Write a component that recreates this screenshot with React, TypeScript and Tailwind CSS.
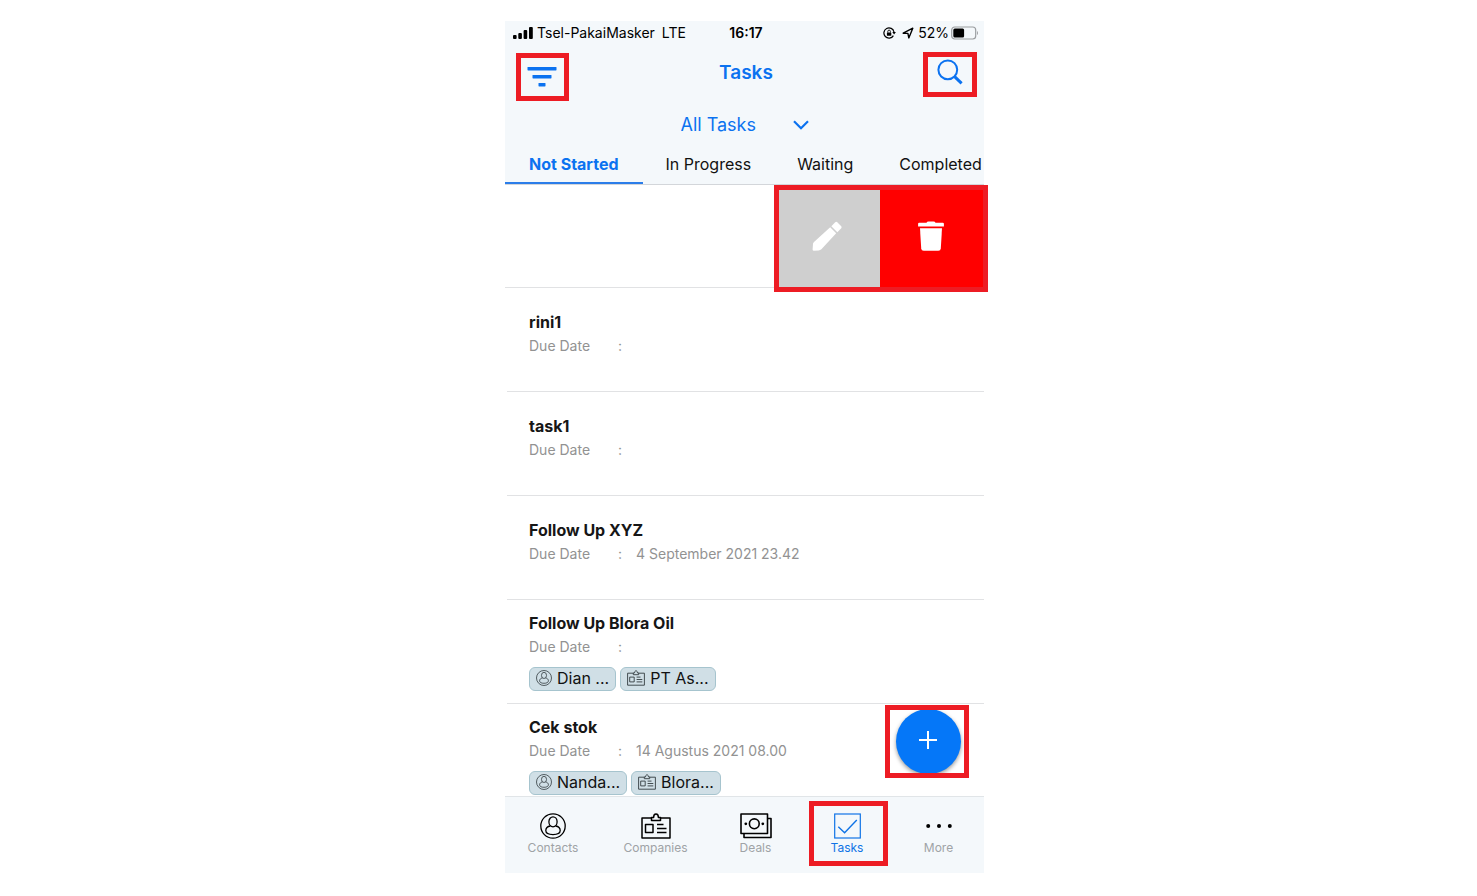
import { useState } from "react";
import type { ReactNode } from "react";

type Chip = { kind: "contact" | "company"; label: string };
type Task = { title: string; due?: string; chips?: Chip[] };

const tasks: Task[] = [
  { title: "rini1" },
  { title: "task1" },
  { title: "Follow Up XYZ", due: "4 September 2021 23.42" },
  {
    title: "Follow Up Blora Oil",
    chips: [
      { kind: "contact", label: "Dian ..." },
      { kind: "company", label: "PT As..." },
    ],
  },
  {
    title: "Cek stok",
    due: "14 Agustus 2021 08.00",
    chips: [
      { kind: "contact", label: "Nanda..." },
      { kind: "company", label: "Blora..." },
    ],
  },
];

const stages = ["Not Started", "In Progress", "Waiting", "Completed"];

function ContactIcon({ className }: { className: string }) {
  return (
    <svg viewBox="0 0 26 26" className={className} fill="none" stroke="currentColor" strokeWidth="1.3" aria-hidden="true">
      <circle cx="13" cy="13" r="12.2" />
      <ellipse cx="13" cy="8.8" rx="4.1" ry="5" />
      <path d="M10.4 13C7.5 13.4 5.8 15.3 5.8 17.6C5.8 20.2 8.8 21.6 13 21.6S20.2 20.2 20.2 17.6C20.2 15.3 18.5 13.4 15.6 13" />
    </svg>
  );
}

function CompanyIcon({ className }: { className: string }) {
  return (
    <svg viewBox="0 0 30 26" className={className} fill="none" stroke="currentColor" strokeWidth="1.5" strokeLinejoin="round" aria-hidden="true">
      <path d="M10.5 5H1V25H29V5H19.5" />
      <path d="M10.5 7.5V4.5H12.6C12.6 2.4 13.5 1 15 1S17.4 2.4 17.4 4.5H19.5V7.5Z" />
      <rect x="4.5" y="11.5" width="7.5" height="8" />
      <path d="M16 11.5H22.5M16 15.5H25.5M16 19.5H25.5" />
    </svg>
  );
}

function DealsIcon() {
  return (
    <svg viewBox="0 0 32 26" className="h-[26px] w-8" fill="none" stroke="currentColor" strokeWidth="1.6" strokeLinejoin="round" aria-hidden="true">
      <rect x="1" y="1" width="26.5" height="19.5" />
      <path d="M27.5 5.5H31V24.5H4V20.5" />
      <circle cx="14.3" cy="10.8" r="4.9" />
      <circle cx="5.8" cy="10.8" r="1.4" fill="currentColor" stroke="none" />
      <circle cx="22.8" cy="10.8" r="1.4" fill="currentColor" stroke="none" />
    </svg>
  );
}

function TasksIcon() {
  return (
    <svg viewBox="0 0 27 26" className="h-[26px] w-[27px]" fill="none" stroke="currentColor" strokeWidth="1.2" aria-hidden="true">
      <rect x="0.7" y="1" width="25.6" height="24" />
      <path d="M4.3 13.8L10.6 19.8L22.8 7" strokeWidth="1.4" />
    </svg>
  );
}

function MoreIcon() {
  return (
    <svg viewBox="0 0 26 26" className="size-[26px]" fill="currentColor" aria-hidden="true">
      <circle cx="2.2" cy="13" r="2" />
      <circle cx="13" cy="13" r="2" />
      <circle cx="23.8" cy="13" r="2" />
    </svg>
  );
}

const tabs: { label: string; icon: ReactNode }[] = [
  { label: "Contacts", icon: <ContactIcon className="size-[26px]" /> },
  { label: "Companies", icon: <CompanyIcon className="h-[26px] w-[30px]" /> },
  { label: "Deals", icon: <DealsIcon /> },
  { label: "Tasks", icon: <TasksIcon /> },
  { label: "More", icon: <MoreIcon /> },
];

function StatusBar() {
  return (
    <div className="grid h-6 grid-cols-[1fr_auto_1fr] items-center pr-[5px] pl-2 text-sm text-black">
      <div className="flex items-center gap-1">
        <svg viewBox="0 0 20 12" className="h-3 w-5" fill="currentColor" aria-hidden="true">
          <rect x="0" y="8" width="3.6" height="4" rx="1" />
          <rect x="5.3" y="6" width="3.6" height="6" rx="1" />
          <rect x="10.6" y="3" width="3.6" height="9" rx="1" />
          <rect x="16" y="0" width="3.8" height="12" rx="1" />
        </svg>
        <span>Tsel-PakaiMasker</span>
        <span className="pl-[3px]">LTE</span>
      </div>
      <time className="font-semibold">16:17</time>
      <div className="flex items-center justify-end">
        <svg viewBox="0 0 13 12" className="mr-1.5 h-3 w-[13px]" fill="none" stroke="currentColor" strokeWidth="1.2" aria-hidden="true">
          <path d="M10.4 8.6A5.1 5.1 0 1 1 11 5" />
          <path d="M9.3 5.1H12.9L11.1 7.6Z" fill="currentColor" stroke="none" />
          <rect x="3.9" y="5.4" width="4.4" height="3.4" rx="0.5" fill="currentColor" stroke="none" />
          <path d="M4.8 5.6V4.4A1.3 1.3 0 0 1 7.4 4.4V5.6" strokeWidth="0.9" />
        </svg>
        <svg viewBox="0 0 12 12" className="mr-1 size-3" fill="none" stroke="currentColor" strokeWidth="1.4" strokeLinejoin="round" aria-hidden="true">
          <path d="M1.2 6.2L10.8 1.2L6.8 10.9L5.9 6.4Z" />
        </svg>
        <span>52%</span>
        <svg viewBox="0 0 28 14" className="ml-0.5 h-3.5 w-7" fill="none" aria-hidden="true">
          <rect x="0.7" y="1" width="24" height="12" rx="3" stroke="#9a9da0" strokeWidth="1.2" />
          <rect x="2.3" y="2.6" width="10.8" height="8.8" rx="1.5" fill="#000" />
          <path d="M26 5V9C27.3 8.5 27.3 5.5 26 5Z" fill="#9a9da0" />
        </svg>
      </div>
    </div>
  );
}

function TaskRow({ task, last }: { task: Task; last: boolean }) {
  return (
    <li
      className={`ml-0.5 pl-[22px] ${last ? "h-[92px]" : "h-26 border-b border-[#e1e2e4]"} ${
        task.chips ? "pt-3" : "pt-[23px]"
      }`}
    >
      <h2 className="pb-0.5 text-base leading-[22px] font-bold text-[#161616]">{task.title}</h2>
      <dl className="flex text-sm leading-[22px] text-[#929292]">
        <dt className="flex w-[107px]">
          <span className="w-[89px]">Due Date</span>:
        </dt>
        <dd>{task.due}</dd>
      </dl>
      {task.chips && (
        <div className="flex gap-1 pt-[9px]">
          {task.chips.map((chip) => (
            <a
              key={chip.label}
              href={`#${chip.kind}`}
              className="flex h-6 items-center gap-[5px] rounded-md border border-[#a6c4ce] bg-[#d0dfe6] px-1.5 pb-0.5 text-base leading-5 text-[#111]"
            >
              {chip.kind === "contact" ? (
                <ContactIcon className="size-4 text-[#333c40]" />
              ) : (
                <CompanyIcon className="h-4 w-[18px] text-[#333c40]" />
              )}
              {chip.label}
            </a>
          ))}
        </div>
      )}
    </li>
  );
}

export default function App() {
  const [stage, setStage] = useState("Not Started");
  const [tab, setTab] = useState("Tasks");

  return (
    <div className="flex min-h-screen justify-center bg-white pt-[21px] pl-3 font-['Inter',sans-serif]">
      <main className="h-fit w-full max-w-[479px] bg-white">
        <header className="bg-[#f4f8fb]">
          <StatusBar />
          <div className="flex h-14 items-center justify-between pr-[7px] pl-[11px] text-[#0b72f0]">
            <button aria-label="Filter" className="mt-2 flex h-12 w-[53px] items-center justify-center border-[5px] border-[#ed1c24] pr-0.5">
              <svg viewBox="0 0 30 20" className="h-5 w-[30px]" fill="currentColor" aria-hidden="true">
                <rect x="0.5" y="0" width="29" height="3.4" rx="0.6" />
                <rect x="5.5" y="8" width="19" height="3.4" rx="0.6" />
                <rect x="11.5" y="16" width="7" height="3.4" rx="0.6" />
              </svg>
            </button>
            <h1 className="text-[19px] font-semibold">Tasks</h1>
            <button aria-label="Search" className="mt-0.5 flex h-[45px] w-[54px] items-center justify-center border-[5px] border-[#ed1c24]">
              <svg viewBox="0 0 26 26" className="mb-1 size-[26px]" fill="none" stroke="currentColor" aria-hidden="true">
                <circle cx="10.8" cy="10.8" r="9.4" strokeWidth="2" />
                <path d="M17.6 17.6L24.6 24.4" strokeWidth="3" />
              </svg>
            </button>
          </div>
          <div className="flex h-12 items-center justify-center text-[#0b72f0]">
            <div className="relative flex w-32 items-center">
              <select aria-label="Task list" className="w-full appearance-none bg-transparent text-lg leading-6">
                <option>All Tasks</option>
              </select>
              <svg viewBox="0 0 16 10" className="pointer-events-none absolute right-0 h-2.5 w-4" fill="none" stroke="currentColor" strokeWidth="2.2" aria-hidden="true">
                <path d="M1 1.3L8 8.3L15 1.3" />
              </svg>
            </div>
          </div>
          <nav aria-label="Task stages" className="flex h-9 overflow-hidden border-b border-[#d3d6da] text-base whitespace-nowrap">
            {stages.map((name) => (
              <button
                key={name}
                onClick={() => setStage(name)}
                className={`border-b-2 pb-1 ${
                  stage === name
                    ? "border-[#2b7de9] px-6 font-bold text-[#0b72f0]"
                    : "border-transparent px-[23px] text-[#111]"
                }`}
              >
                {name}
              </button>
            ))}
          </nav>
        </header>

        <div className="relative">
          <ul>
            <li className="relative h-[103px] border-b border-[#e1e2e4]">
              <div className="absolute top-0 -right-1 flex h-[107px] w-[214px] border-[5px] border-[#ed1c24] text-white">
                <button aria-label="Edit task" className="flex w-[101px] items-center justify-center bg-[#cfcfcf] pr-1.5 pb-1.5">
                  <svg viewBox="0 0 30 30" className="size-[30px]" fill="currentColor" aria-hidden="true">
                    <path d="M18.2 6.3L24.2 12.3L9.4 28.2Q8.2 29.3 6.6 29.4L1.6 29.7Q0.5 29.7 0.6 28.6L1 22.8Q1.1 21.7 2 20.9Z" />
                    <path d="M19.3 5.2L23 1.4Q24.2 0.3 25.5 1.4L29 4.9Q30.1 6.1 29 7.4L25.3 11.2Z" />
                  </svg>
                </button>
                <button aria-label="Delete task" className="flex flex-1 items-center justify-center bg-[#ff0000] pr-0.5 pb-1.5">
                  <svg viewBox="0 0 26 30" className="h-[30px] w-[26px]" fill="currentColor" aria-hidden="true">
                    <path d="M8.5 1.7Q9 0.4 10.5 0.4H15.5Q17 0.4 17.5 1.7H24.8Q25.9 1.7 25.9 2.8V5.6H0.1V2.8Q0.1 1.7 1.2 1.7Z" />
                    <path d="M2 7.3H24L22.8 27.4Q22.6 29.7 20.3 29.7H5.7Q3.4 29.7 3.2 27.4Z" />
                  </svg>
                </button>
              </div>
            </li>
            {tasks.map((task, i) => (
              <TaskRow key={task.title} task={task} last={i === tasks.length - 1} />
            ))}
          </ul>
          <div className="absolute right-[15px] bottom-[18px] flex h-[73px] w-[84px] justify-center overflow-hidden border-[5px] border-[#ed1c24] bg-white pl-0.5">
            <button
              aria-label="Add task"
              className="-mt-px flex size-[65px] shrink-0 items-center justify-center rounded-full bg-[#0577f8] pb-1 text-white shadow-[0_2px_4px_rgba(0,0,0,0.4)]"
            >
              <svg viewBox="0 0 18 18" className="size-[18px]" stroke="currentColor" strokeWidth="2" aria-hidden="true">
                <path d="M9 0V18M0 9H18" />
              </svg>
            </button>
          </div>
        </div>

        <nav
          aria-label="Main"
          className="grid h-[77px] grid-cols-[96fr_109fr_91fr_92fr_91fr] border-t border-[#e1e5e8] bg-[#f4f8fb] text-xs"
        >
          {tabs.map(({ label, icon }) => (
            <button
              key={label}
              onClick={() => setTab(label)}
              className={`relative flex flex-col items-center gap-px pt-4 ${tab === label ? "text-[#0f73e6]" : "text-black"}`}
            >
              {icon}
              <span className={tab === label ? "" : "text-[#9fa3a6]"}>{label}</span>
              {label === "Tasks" && (
                <span className="absolute top-1 left-2 h-[65px] w-[79px] border-[5px] border-[#ed1c24]" />
              )}
            </button>
          ))}
        </nav>
      </main>
    </div>
  );
}
